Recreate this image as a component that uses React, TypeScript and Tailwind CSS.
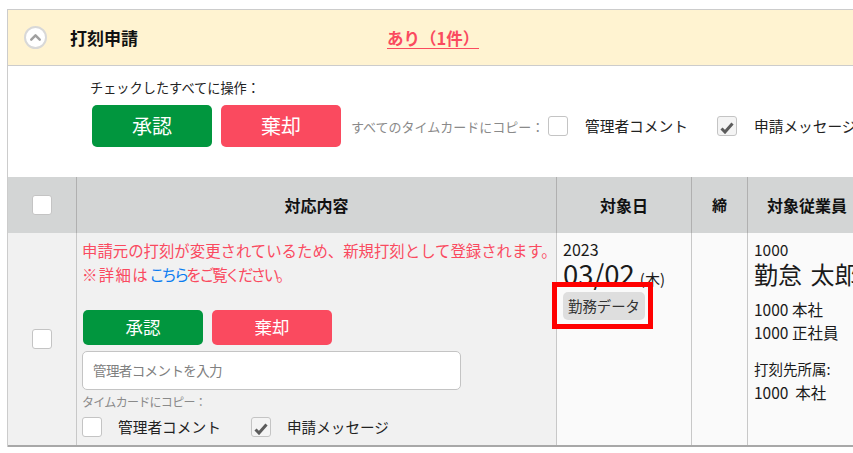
import { ChevronUp } from "lucide-react";

const font = { fontFamily: '"Noto Sans CJK JP", "Noto Sans", sans-serif' };

const CheckBox = ({ checked = false }: { checked?: boolean }) => (
  <span
    className={`flex h-[20px] w-[20px] shrink-0 items-center justify-center rounded-[3px] border border-[#c4c4c4] ${
      checked ? "bg-[#f4f4f4]" : "bg-white"
    }`}
  >
    {checked && (
      <svg width="14" height="12" viewBox="0 0 14 12" className="mt-[3px]">
        <path d="M1.5 6.5 L5 10 L12.5 1.5" fill="none" stroke="#5c5c5c" strokeWidth="3" />
      </svg>
    )}
  </span>
);

export default function App() {
  return (
    <div className="relative h-[453px] w-[853px] overflow-hidden bg-white pl-[7px] pt-[9px] text-[#1a1a1a]" style={font}>
      <div className="h-[438px] w-[900px] border-l border-t border-[#cccccc]">
        {/* panel header */}
        <div className="flex h-[56px] items-center border-b border-[#cccccc] bg-[#fff3d1]">
          <span className="ml-[16px] flex h-[23px] w-[23px] items-center justify-center rounded-full border-2 border-[#d8d8d8] bg-white">
            <ChevronUp size={17} strokeWidth={3.5} className="text-[#a0a0a0]" />
          </span>
          <span className="ml-[23px] text-[17px] font-bold leading-none text-[#111]">打刻申請</span>
          <span className="ml-[249px] mt-[2px] border-b border-[#fa4a5f] text-[16.5px] font-bold leading-[19px] text-[#fa4a5f]">
            あり（1件）
          </span>
        </div>

        {/* bulk actions */}
        <div className="h-[111px] pl-[84px] pt-[12px]">
          <div className="-ml-[2px] text-[13.2px] leading-[20px] text-[#222]">チェックしたすべてに操作：</div>
          <div className="mt-[7px] flex items-center">
            <button className="h-[42px] w-[120px] rounded-[5px] bg-[#01963e] text-[20px] text-white">承認</button>
            <button className="ml-[9px] h-[42px] w-[120px] rounded-[5px] bg-[#fa4a5f] text-[20px] text-white">棄却</button>
            <span className="ml-[10px] mt-[1px] w-[197px] whitespace-nowrap text-[13px] text-[#8a8a8a]">すべてのタイムカードにコピー：</span>
            <CheckBox />
            <span className="ml-[17px] w-[132px] whitespace-nowrap text-[14.7px] text-[#222]">管理者コメント</span>
            <CheckBox checked />
            <span className="ml-[17px] whitespace-nowrap text-[14.7px] text-[#222]">申請メッセージ</span>
          </div>
        </div>

        {/* table header */}
        <div className="grid h-[56px] grid-cols-[69px_480px_135px_56px_1fr] bg-[#d3d5d5] text-[16px] font-bold text-[#111]">
          <div className="flex items-center justify-center border-r border-[#b0b0b0]"><CheckBox /></div>
          <div className="flex items-center justify-center border-r border-[#b0b0b0]">対応内容</div>
          <div className="flex items-center justify-center border-r border-[#b0b0b0]">対象日</div>
          <div className="flex items-center justify-center border-r border-[#b0b0b0] text-[15px]">締</div>
          <div className="pl-[19px] leading-[56px]">対象従業員</div>
        </div>

        {/* table row */}
        <div className="grid h-[214px] grid-cols-[69px_480px_135px_56px_1fr] border-b-2 border-[#a8a8a8]">
          <div className="flex items-center justify-center border-r border-[#c8c8c8] bg-[#f1f1f1]"><CheckBox /></div>
          <div className="border-r border-[#c8c8c8] bg-[#f1f1f1] pl-[5px] pt-[5px]">
            <p className="whitespace-nowrap text-[15.4px] leading-[24px] text-[#fa4a5f]">申請元の打刻が変更されているため、新規打刻として登録されます。</p>
            <p className="whitespace-nowrap text-[15.4px] leading-[24px] text-[#fa4a5f]">
              <span className="tracking-[1.4px]">※詳細は</span>
              <span className="tracking-[-3px] text-[#0a7cf0]">こちら</span>
              <span className="tracking-[-2.5px]">をご覧ください。</span>
            </p>
            <div className="mt-[24px] flex gap-[9px] pl-[1px]">
              <button className="h-[35px] w-[120px] rounded-[5px] bg-[#01963e] text-[17.5px] text-white">承認</button>
              <button className="h-[35px] w-[120px] rounded-[5px] bg-[#fa4a5f] text-[17.5px] text-white">棄却</button>
            </div>
            <div className="mt-[6px] flex h-[39px] w-[379px] items-center rounded-[5px] border border-[#c4c4c4] bg-white pl-[10px] text-[13.5px] tracking-[-0.6px] text-[#808080]">
              管理者コメントを入力
            </div>
            <div className="mt-[2px] text-[12px] leading-[20px] tracking-[-0.7px] text-[#8a8a8a]">タイムカードにコピー：</div>
            <div className="mt-[4px] flex items-center">
              <CheckBox />
              <span className="ml-[16px] w-[133px] whitespace-nowrap text-[14.7px] text-[#222]">管理者コメント</span>
              <CheckBox checked />
              <span className="ml-[16px] whitespace-nowrap text-[14.6px] text-[#222]">申請メッセージ</span>
            </div>
          </div>
          <div className="border-r border-[#c8c8c8] bg-[#fafafa] pl-[6px] pt-[7px]">
            <div className="text-[16px] leading-[19px]">2023</div>
            <div className="flex h-[33px] items-baseline leading-[28px]">
              <span className="text-[27.5px]">03/02</span>
              <span className="ml-[5px] text-[15px]">(木)</span>
            </div>
            <span className="inline-flex h-[28px] w-[82px] items-center justify-center rounded-[5px] bg-[#dedede] text-[14.4px] text-[#333]">勤務データ</span>
          </div>
          <div className="border-r border-[#c8c8c8] bg-[#fafafa]" />
          <div className="whitespace-nowrap bg-[#fafafa] pl-[6px] pt-[7px]">
            <div className="text-[15.5px] leading-[19px]">1000</div>
            <div className="text-[24px] leading-[30px] [word-spacing:3px]">勤怠 太郎</div>
            <div className="mt-[9px] text-[15.5px] leading-[23px]">1000 本社</div>
            <div className="text-[15.5px] leading-[23px]">1000 正社員</div>
            <div className="mt-[13px] text-[14.5px] leading-[23.5px]">打刻先所属:</div>
            <div className="text-[15.5px] leading-[23.5px]">1000&nbsp; 本社</div>
          </div>
        </div>
      </div>

      {/* red annotation box */}
      <div className="absolute left-[552px] top-[282px] h-[47px] w-[101px] border-[5px] border-[#ff0000]" />
    </div>
  );
}
